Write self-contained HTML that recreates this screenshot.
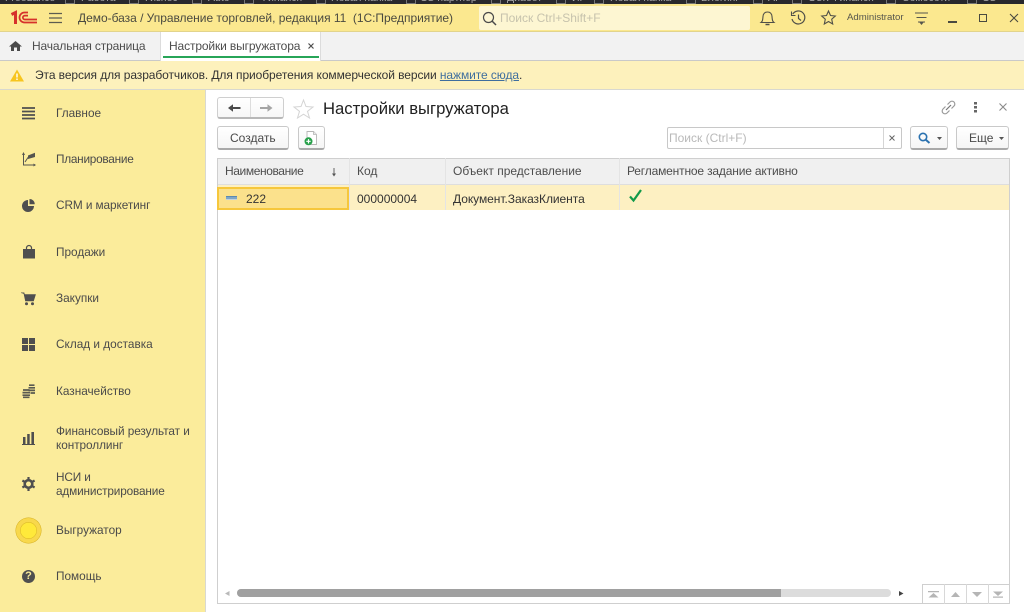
<!DOCTYPE html>
<html lang="ru"><head><meta charset="utf-8"><title>Настройки выгружатора</title>
<style>
html,body{margin:0;padding:0;width:1024px;height:612px;overflow:hidden;background:#fff}
body{position:relative;font-family:"Liberation Sans",Arial,sans-serif;font-size:12px;color:#4a4a4a}
#w{position:absolute;left:0;top:0;width:1024px;height:612px;overflow:hidden;filter:blur(.3px)}
.a{position:absolute;white-space:nowrap}
svg{position:absolute;overflow:visible}
.btn{position:absolute;box-sizing:border-box;background:linear-gradient(#fff,#f5f5f5);border:1px solid #c9c9c9;border-bottom:2px solid #a9a9a9;border-radius:3px}
.m{position:absolute;left:56px;color:#4a4a4a;font-size:11.8px;line-height:15px;white-space:nowrap}
.h{position:absolute;top:158px;height:27px;line-height:27px;color:#4d4d4d;font-size:12px;white-space:nowrap}
.ds{position:absolute;top:158px;width:1px;height:52px;background:#e4e4e4}
.tb{position:absolute;top:-8px;color:#a8a8a8;font-size:10.5px;line-height:12px;height:12px;white-space:nowrap}
.sq{position:absolute;top:0;width:8px;height:3px;border:1px solid #777;border-top:0}
</style></head><body><div id="w">

<!-- top dark strip -->
<div class="a" style="left:0;top:0;width:1024px;height:4px;background:#28282c;overflow:hidden">
<span class="tb" style="left:5px">FreeLance</span><span class="tb" style="left:81px">Работа</span><span class="tb" style="left:145px">Гизнес</span><span class="tb" style="left:208px">Auto</span><span class="tb" style="left:260px">Финансп</span><span class="tb" style="left:331px">Новая папка</span><span class="tb" style="left:421px">1С партнер</span><span class="tb" style="left:507px">Диабет</span><span class="tb" style="left:572px">ИР</span><span class="tb" style="left:610px">Новая папка</span><span class="tb" style="left:701px">Блогинг</span><span class="tb" style="left:768px">AI</span><span class="tb" style="left:808px">ОЗК Финансп</span><span class="tb" style="left:902px">Сомосоти</span><span class="tb" style="left:983px">1С</span>
<span class="sq" style="left:65px"></span><span class="sq" style="left:129px"></span><span class="sq" style="left:192px"></span><span class="sq" style="left:244px"></span><span class="sq" style="left:316px"></span><span class="sq" style="left:406px"></span><span class="sq" style="left:491px"></span><span class="sq" style="left:556px"></span><span class="sq" style="left:594px"></span><span class="sq" style="left:686px"></span><span class="sq" style="left:753px"></span><span class="sq" style="left:792px"></span><span class="sq" style="left:886px"></span><span class="sq" style="left:967px"></span>
</div>

<!-- title bar -->
<div class="a" style="left:0;top:4px;width:1024px;height:28px;background:#fbe88f;border-bottom:1px solid #e2d48c;box-sizing:border-box"></div>
<svg style="left:10px;top:10px" width="28" height="15" viewBox="0 0 28 15"><path d="M1.5 4.5L5.500 2.500V14" fill="none" stroke="#d6312b" stroke-width="3"/><path d="M18 2.500H14.500a4.900 4.900 0 0 0 0 10H27" fill="none" stroke="#d6312b" stroke-width="1.700"/><path d="M18 5.600H14.800a1.900 1.900 0 0 0 0 3.900H27" fill="none" stroke="#d6312b" stroke-width="1.700"/></svg>
<svg style="left:49px;top:12px" width="14" height="12"><path d="M0 1.500H13M0 6H13M0 10.500H13" stroke="#5c5c50" stroke-width="1.200"/></svg>
<div class="a" style="left:78px;top:10px;font-size:12px;line-height:16px;color:#4a4a40;letter-spacing:-.03px">Демо-база / Управление торговлей, редакция 11&nbsp; (1С:Предприятие)</div>
<div class="a" style="left:479px;top:6px;width:271px;height:24px;background:#fdf6d2;border-radius:2px"></div>
<svg style="left:482px;top:11px" width="15" height="15"><circle cx="6.500" cy="6.500" r="5" fill="none" stroke="#4a4a4a" stroke-width="1.200"/><path d="M10 10L14 14" stroke="#4a4a4a" stroke-width="1.500"/></svg>
<div class="a" style="left:500px;top:10px;font-size:12px;line-height:16px;color:#c7c3ad">Поиск Ctrl+Shift+F</div>
<svg style="left:760px;top:10px" width="15" height="16"><path d="M1 12.500C2.800 11 2.700 9.500 3 6.500C3.300 3.500 5 2 7.500 2S11.700 3.500 12 6.500C12.300 9.500 12.200 11 14 12.500Z" fill="none" stroke="#4f4f48" stroke-width="1.100"/><path d="M5.500 14.500H9.500" stroke="#4f4f48" stroke-width="1.500"/></svg>
<svg style="left:790px;top:10px" width="16" height="16"><path d="M2.800 4A6.500 6.500 0 1 1 2 9" fill="none" stroke="#4f4f48" stroke-width="1.200"/><path d="M1.500 1.500V5.500H5.500" fill="none" stroke="#4f4f48" stroke-width="1.100"/><path d="M8.500 4.500V8.500L11 10.500" fill="none" stroke="#4f4f48" stroke-width="1.200"/></svg>
<svg style="left:821px;top:10px" width="15" height="15"><path d="M7.500 1L9.500 5.500L14.300 6L10.700 9.200L11.700 14L7.500 11.500L3.300 14L4.300 9.200L.7 6L5.500 5.500Z" fill="none" stroke="#4f4f48" stroke-width="1.100"/></svg>
<div class="a" style="left:847px;top:10px;font-size:9.6px;line-height:15px;color:#55554c">Administrator</div>
<svg style="left:914px;top:12px" width="15" height="14"><path d="M1 1H14M2.500 5.500H12.500M4 10H11" stroke="#55554c" stroke-width="1.100" fill="none"/><path d="M5.500 10.500H9.500L7.500 13Z" fill="#55554c"/></svg>
<div class="a" style="left:948px;top:21px;width:9px;height:2px;background:#4a4a40"></div>
<div class="a" style="left:979px;top:14px;width:8px;height:8px;box-sizing:border-box;border:1.500px solid #4a4a40"></div>
<svg style="left:1009px;top:13px" width="10" height="10"><path d="M1 1L9 9M9 1L1 9" stroke="#4a4a40" stroke-width="1.100"/></svg>

<!-- tab bar -->
<div class="a" style="left:0;top:32px;width:1024px;height:29px;background:#f2f2f2;border-bottom:1px solid #c9c9c9;box-sizing:border-box"></div>
<svg style="left:9px;top:41px" width="13" height="10"><path d="M6.500 0L13 5.500H11V10H8V6.500H5V10H2V5.500H0Z" fill="#4a4a4a"/></svg>
<div class="a" style="left:32px;top:38px;line-height:16px;color:#4d4d4d;letter-spacing:-.15px">Начальная страница</div>
<div class="a" style="left:160px;top:32px;width:161px;height:29px;background:#fff;border-left:1px solid #dcdcdc;border-right:1px solid #dcdcdc;box-sizing:border-box"></div>
<div class="a" style="left:163px;top:56px;width:156px;height:2px;background:#27a558"></div>
<div class="a" style="left:169px;top:38px;line-height:16px;color:#4d4d4d;letter-spacing:-.13px">Настройки выгружатора</div>
<svg style="left:308px;top:43px" width="6" height="6"><path d="M.5 .5L5.500 5.500M5.500 .5L.5 5.500" stroke="#4d4d4d" stroke-width="1.200"/></svg>

<!-- warning bar -->
<div class="a" style="left:0;top:61px;width:1024px;height:29px;background:#fdf1bc;border-bottom:1px solid #d8d8d0;box-sizing:border-box"></div>
<svg style="left:10px;top:69px" width="14" height="13"><path d="M7 0.500L14 12.500H0Z" fill="#f7c51e"/><path d="M7 4.500V8.500M7 9.500V11" stroke="#fff" stroke-width="1.400"/></svg>
<div class="a" style="left:35px;top:67px;line-height:16px;color:#333;letter-spacing:-.082px">Эта версия для разработчиков. Для приобретения коммерческой версии <span style="color:#3f6e9e;text-decoration:underline">нажмите сюда</span>.</div>

<!-- sidebar -->
<div class="a" style="left:0;top:90px;width:206px;height:522px;background:#fbec9b;border-right:1px solid #d9d9d0;box-sizing:border-box"></div>
<svg style="left:22px;top:107px" width="13" height="13"><path d="M0 1H13M0 4.500H13M0 8H13M0 11.500H13" stroke="#4f4f4f" stroke-width="1.700"/></svg>
<div class="m" style="top:106px">Главное</div>
<svg style="left:22px;top:152px" width="14" height="15"><path d="M1.500 1V13H13" fill="none" stroke="#55554f" stroke-width="1"/><path d="M3 10L6 5.500L10 3" fill="none" stroke="#55554f" stroke-width="1"/><path d="M6 3.500L13 .8V5L6 7Z" fill="#55554f"/><path d="M0 3L1.500 0L3 3ZM11.500 11.500L14 13L11.500 14.500Z" fill="#55554f"/></svg>
<div class="m" style="top:152px;letter-spacing:-.25px">Планирование</div>
<svg style="left:22px;top:199px" width="13" height="13"><path d="M6 1A6 6 0 1 0 12 7H6Z" fill="#4f4f4f"/><path d="M7.500 0A5 5 0 0 1 12.700 5.200H7.500Z" fill="#4f4f4f"/></svg>
<div class="m" style="top:198px;letter-spacing:-.08px">CRM и маркетинг</div>
<svg style="left:23px;top:245px" width="12" height="14"><path d="M0 4H12V13.500H0Z" fill="#4f4f4f"/><path d="M3.500 5V3A2.500 2.500 0 0 1 8.500 3V5" fill="none" stroke="#4f4f4f" stroke-width="1.200"/></svg>
<div class="m" style="top:245px">Продажи</div>
<svg style="left:21px;top:292px" width="15" height="14"><path d="M0 .8H3L3.500 2.500H14.500L12.500 9H4.500L3 2" fill="#4f4f4f" stroke="#4f4f4f" stroke-width=".6"/><circle cx="5.500" cy="11.800" r="1.500" fill="#4f4f4f"/><circle cx="11.500" cy="11.800" r="1.500" fill="#4f4f4f"/></svg>
<div class="m" style="top:291px">Закупки</div>
<svg style="left:22px;top:338px" width="13" height="13"><path d="M0 0H6V6H0ZM7 0H13V6H7ZM0 7H6V13H0ZM7 7H13V13H7Z" fill="#4f4f4f"/></svg>
<div class="m" style="top:337px">Склад и доставка</div>
<svg style="left:22px;top:384px" width="13" height="14"><path d="M7 1.200H12.500M6.500 3.800H13M6.500 6.400H13M8.500 9H13M1 6H7.500M.5 8.600H8M.5 11.200H8M1 13.300H7.500" stroke="#5a5a50" stroke-width="1.700"/></svg>
<div class="m" style="top:384px">Казначейство</div>
<svg style="left:22px;top:432px" width="13" height="13"><path d="M1 5H3.500V12H1ZM5.200 2H7.700V12H5.200ZM9.400 0H12V12H9.400ZM0 12H13V13H0Z" fill="#4f4f4f"/></svg>
<div class="m" style="top:424px;line-height:14px;letter-spacing:-.06px">Финансовый результат и<br>контроллинг</div>
<svg style="left:22px;top:477px" width="13" height="14" viewBox="0 0 13 14"><circle cx="6.500" cy="7" r="3.800" fill="none" stroke="#4f4f4f" stroke-width="2.600"/><path d="M6.500 0V2.500M6.500 11.500V14M.4 3.500L2.600 4.800M10.400 9.200L12.600 10.500M.4 10.500L2.600 9.200M10.400 4.800L12.600 3.500" stroke="#4f4f4f" stroke-width="2.200"/></svg>
<div class="m" style="top:470px;line-height:14px;letter-spacing:-.15px">НСИ и<br>администрирование</div>
<div class="a" style="left:16px;top:518px;width:25px;height:25px;box-sizing:border-box;border-radius:50%;background:#ffe93a;border:4px solid #f8d84c;box-shadow:inset 0 0 0 .6px #d9b52a,0 0 0 .5px #d4ae20"></div>
<div class="m" style="top:523px">Выгружатор</div>
<div class="a" style="left:22px;top:570px;width:13px;height:13px;border-radius:50%;background:#4f4f4f;color:#fbec9b;font-size:11px;font-weight:bold;line-height:13px;text-align:center">?</div>
<div class="m" style="top:569px">Помощь</div>

<!-- form head -->
<div class="a" style="left:217px;top:97px;width:67px;height:22px;box-sizing:border-box;border:1px solid #cfcfcf;border-bottom:2px solid #b8b8b8;border-radius:3px;background:linear-gradient(#fff,#f7f7f7)"></div>
<div class="a" style="left:250px;top:98px;width:1px;height:19px;background:#ddd"></div>
<svg style="left:228px;top:103px" width="13" height="10"><path d="M12.500 5H4" stroke="#4a4a4a" stroke-width="2"/><path d="M0 5L5 1.200V8.800Z" fill="#4a4a4a"/></svg>
<svg style="left:260px;top:103px" width="13" height="10"><path d="M0 5H8" stroke="#a5a5a5" stroke-width="2"/><path d="M12.500 5L7.500 1.200V8.800Z" fill="#a5a5a5"/></svg>
<svg style="left:293px;top:99px" width="21" height="20"><path d="M10.500 1L13 7.500L20 8L14.500 12.300L16.500 19L10.500 15.200L4.500 19L6.500 12.300L1 8L8 7.500Z" fill="none" stroke="#d4d4d4" stroke-width="1"/></svg>
<div class="a" style="left:323px;top:98px;font-size:16.650px;line-height:21px;color:#222">Настройки выгружатора</div>
<svg style="left:941px;top:100px" width="15" height="15"><g fill="none" stroke="#9a9a9a" stroke-width="1.200"><path d="M6.500 4.500L9 2A2.800 2.800 0 0 1 13 6L10.500 8.500"/><path d="M8.500 10.500L6 13A2.800 2.800 0 0 1 2 9L4.500 6.500"/><path d="M5 10L10 5" stroke="#777"/></g></svg>
<svg style="left:974px;top:102px" width="4" height="11"><path d="M0 0H3V2.500H0ZM0 4H3V6.500H0ZM0 8H3V10.500H0Z" fill="#666"/></svg>
<svg style="left:999px;top:103px" width="8" height="8"><path d="M.5 .5L7.500 7.500M7.500 .5L.5 7.500" stroke="#8a8a8a" stroke-width="1.100"/></svg>

<!-- toolbar -->
<div class="btn" style="left:217px;top:126px;width:72px;height:24px"></div>
<div class="a" style="left:230px;top:130px;line-height:16px;color:#4a4a4a">Создать</div>
<div class="btn" style="left:298px;top:126px;width:27px;height:24px"></div>
<svg style="left:304px;top:131px" width="14" height="16"><path d="M3 .5H9.500L12.500 3.500V13.500H3Z" fill="#fff" stroke="#b5b5b5" stroke-width=".9"/><path d="M9.500 .5V3.500H12.500" fill="#e8e8e8" stroke="#b5b5b5" stroke-width=".8"/><circle cx="4.500" cy="10.300" r="4" fill="#27a04a"/><path d="M2.300 10.300H6.700M4.500 8.100V12.500" stroke="#fff" stroke-width="1.200"/></svg>
<div class="a" style="left:667px;top:127px;width:235px;height:22px;box-sizing:border-box;border:1px solid #c8c8c8;border-radius:2px;background:#fff"></div>
<div class="a" style="left:883px;top:128px;width:1px;height:20px;background:#d5d5d5"></div>
<div class="a" style="left:669px;top:130px;line-height:16px;color:#b9b9b9">Поиск (Ctrl+F)</div>
<svg style="left:889px;top:135px" width="6" height="6"><path d="M.5 .5L5.500 5.500M5.500 .5L.5 5.500" stroke="#666" stroke-width="1"/></svg>
<div class="btn" style="left:910px;top:126px;width:38px;height:24px"></div>
<svg style="left:918px;top:132px" width="13" height="13"><circle cx="5" cy="5" r="3.700" fill="none" stroke="#2b72b0" stroke-width="1.600"/><path d="M7.800 7.800L11.500 11" stroke="#2b72b0" stroke-width="2"/></svg>
<svg style="left:937px;top:137px" width="5" height="3"><path d="M0 0H5L2.500 3Z" fill="#555"/></svg>
<div class="btn" style="left:956px;top:126px;width:53px;height:24px"></div>
<div class="a" style="left:969px;top:130px;line-height:16px;color:#4a4a4a">Еще</div>
<svg style="left:999px;top:137px" width="5" height="3"><path d="M0 0H5L2.500 3Z" fill="#555"/></svg>

<!-- table -->
<div class="a" style="left:217px;top:158px;width:793px;height:446px;box-sizing:border-box;border:1px solid #cfcfcf;background:#fff"></div>
<div class="a" style="left:218px;top:159px;width:791px;height:26px;background:#f0f0f0;border-bottom:1px solid #dedede;box-sizing:border-box"></div>
<div class="a" style="left:218px;top:185px;width:791px;height:25px;background:#fdf0c2"></div>
<div class="a" style="left:217px;top:187px;width:132px;height:23px;box-sizing:border-box;background:#fbe18c;border:2px solid #f6c73c"></div>
<div class="ds" style="left:349px"></div><div class="ds" style="left:445px"></div><div class="ds" style="left:619px"></div>
<div class="h" style="left:225px;letter-spacing:-.4px">Наименование</div>
<svg style="left:331px;top:168px" width="6" height="9"><path d="M3 0V7" stroke="#555" stroke-width=".9"/><path d="M1 5.500H5L3 8.500Z" fill="#555"/></svg>
<div class="h" style="left:357px">Код</div>
<div class="h" style="left:453px">Объект представление</div>
<div class="h" style="left:627px;letter-spacing:-.17px">Регламентное задание активно</div>
<div class="a" style="left:226px;top:196px;width:11px;height:4px;background:#7fa6c6;border-top:1px solid #5b89b0;border-bottom:1px solid #c3d3dd;box-sizing:border-box"></div>
<div class="a" style="left:246px;top:191px;line-height:16px;color:#333">222</div>
<div class="a" style="left:357px;top:191px;line-height:16px;color:#333">000000004</div>
<div class="a" style="left:453px;top:191px;line-height:16px;color:#333;letter-spacing:-.05px">Документ.ЗаказКлиента</div>
<svg style="left:629px;top:189px" width="13" height="13"><path d="M1 7.500L4.500 11.500L12 1" fill="none" stroke="#129a4a" stroke-width="2.200"/></svg>

<!-- scrollbars -->
<svg style="left:225px;top:591px" width="5" height="5"><path d="M4.500 0V5L0 2.500Z" fill="#b9b9b9"/></svg>
<div class="a" style="left:237px;top:589px;width:654px;height:8px;background:#dcdcdc;border-radius:4px"></div>
<div class="a" style="left:237px;top:589px;width:544px;height:8px;background:#a0a0a0;border-radius:4px 0 0 4px"></div>
<svg style="left:899px;top:591px" width="5" height="5"><path d="M0 0V5L4.500 2.500Z" fill="#444"/></svg>
<div class="a" style="left:922px;top:584px;width:88px;height:20px;box-sizing:border-box;border:1px solid #cfcfcf;background:#fff"></div>
<div class="a" style="left:944px;top:584px;width:1px;height:20px;background:#d8d8d8"></div>
<div class="a" style="left:966px;top:584px;width:1px;height:20px;background:#d8d8d8"></div>
<div class="a" style="left:988px;top:584px;width:1px;height:20px;background:#d8d8d8"></div>
<svg style="left:928px;top:591px" width="76" height="7"><path d="M0 0H11V1.200H0ZM.5 6.500L5.500 2L10.500 6.500Z" fill="#b5b5b5"/><path d="M23 6L27.500 1L32 6Z" fill="#b5b5b5"/><path d="M44 1H54L49 6Z" fill="#b5b5b5"/><path d="M65 .5H75L70 5ZM65 5.500H75V6.700H65Z" fill="#b5b5b5"/></svg>
</div></body></html>
